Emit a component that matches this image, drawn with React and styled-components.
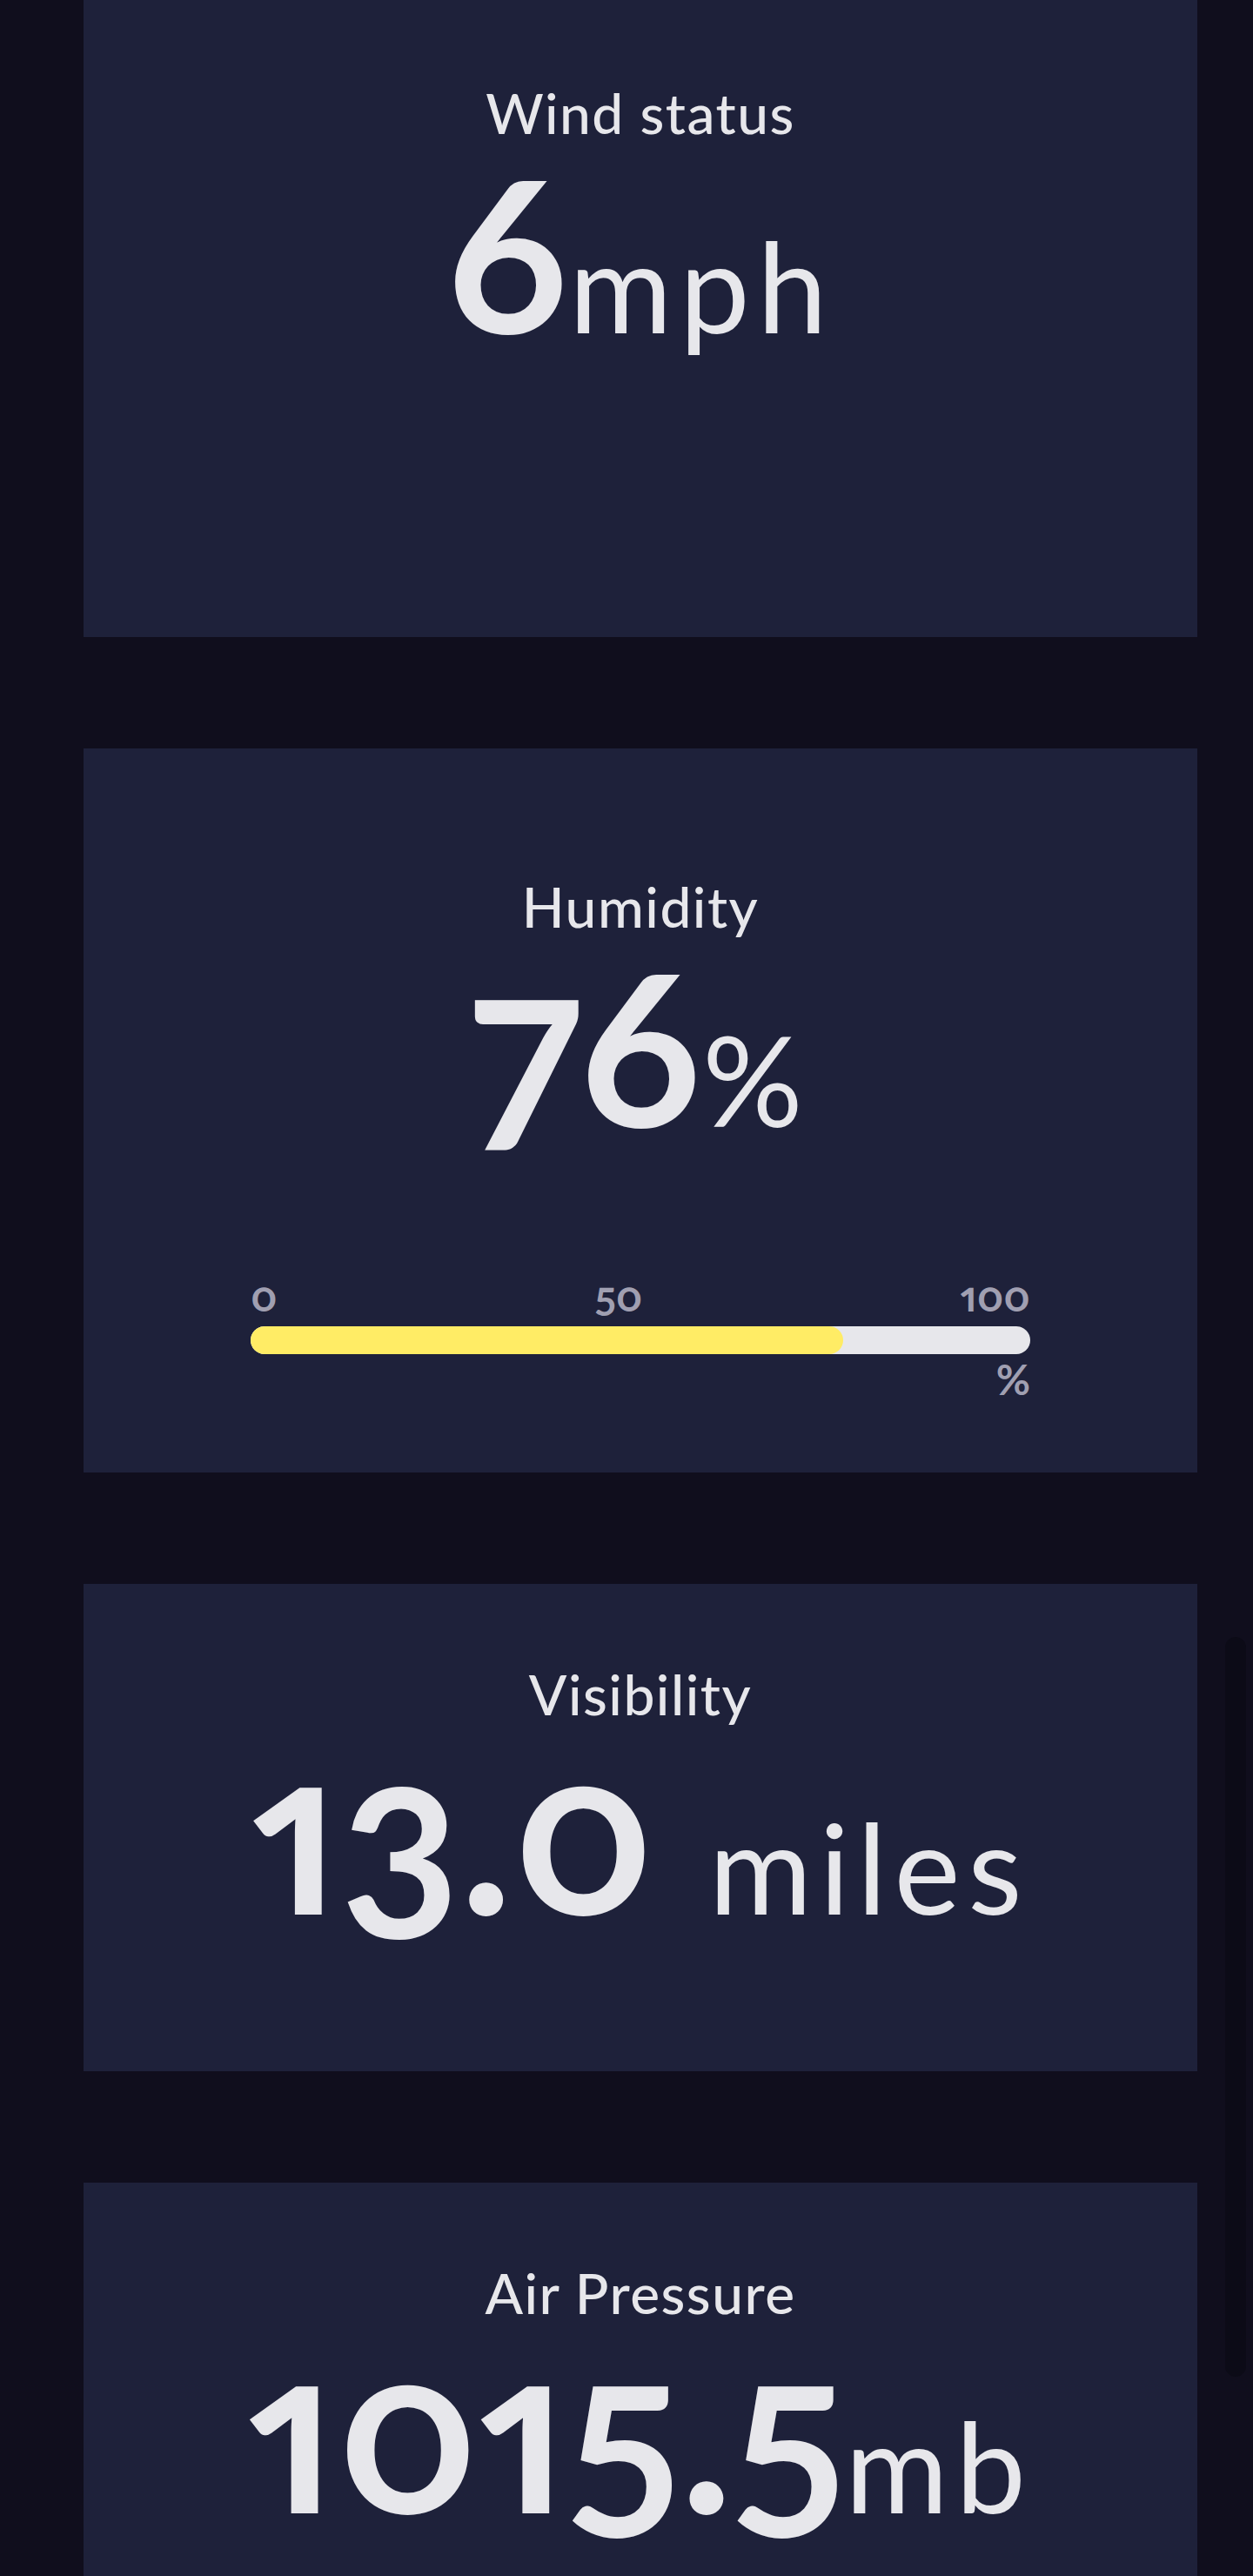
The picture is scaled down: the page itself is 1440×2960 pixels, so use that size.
import React from 'react';
import styled, { createGlobalStyle } from 'styled-components';

const GlobalStyle = createGlobalStyle`
  body {
    margin: 0;
    background-color: #100e1d;
    color: #e7e7eb;
    font-family: Lato, "Open Sans", sans-serif;
  }
`;

const Page = styled.main`
  position: relative;
  box-sizing: border-box;
  height: 100vh;
  overflow: hidden;
  padding: 0 64px 0 96px;
  display: flex;
  flex-direction: column;
  gap: 128px;
`;

const Card = styled.section`
  flex-shrink: 0;
  background-color: #1e213a;
  display: flex;
  flex-direction: column;
  align-items: center;
  padding: ${({ $top }) => $top}px 0 ${({ $bottom }) => $bottom}px;
`;

const Title = styled.h2`
  margin: 0;
  font-size: 64px;
  line-height: 64px;
  font-weight: 500;
  letter-spacing: 1.5px;
`;

const Value = styled.p`
  margin: 0;
  font-size: 256px;
  line-height: 244px;
  font-weight: 700;
  white-space: nowrap;
  font-variant-numeric: oldstyle-nums proportional-nums;
`;

const Unit = styled.span`
  font-size: 144px;
  line-height: 1;
  font-weight: 400;
  letter-spacing: 0.06em;
`;

const Meter = styled.div`
  width: 896px;
  margin-top: 147px;
  display: flex;
  flex-direction: column;
  color: #a09fb1;
  font-size: 48px;
  line-height: 48px;
  font-weight: 700;
  font-variant-numeric: oldstyle-nums proportional-nums;
`;

const Scale = styled.div`
  display: flex;
  justify-content: space-between;
`;

const Track = styled.div`
  margin-top: 11px;
  height: 32px;
  border-radius: 16px;
  background-color: #e7e7eb;
`;

const Fill = styled.div`
  height: 100%;
  border-radius: 16px;
  background-color: #ffec65;
`;

const Percent = styled.span`
  align-self: flex-end;
  margin-top: 5px;
`;

// faux overlay scrollbar thumb, sits on top of the page
const ScrollThumb = styled.div`
  position: absolute;
  top: 1881px;
  right: 8px;
  width: 24px;
  height: 850px;
  border-radius: 12px;
  background-color: #0c0b17;
`;

const StatCard = ({ title, value, unit, spaced, top = 95, bottom = 157, children }) => (
  <Card $top={top} $bottom={bottom}>
    <Title>{title}</Title>
    <Value>
      {value}
      {spaced ? ' ' : ''}
      <Unit>{unit}</Unit>
    </Value>
    {children}
  </Card>
);

const App = () => {
  const humidity = 76;

  return (
    <>
      <GlobalStyle />
      <Page>
        <StatCard title="Wind status" value="6" unit="mph" top={98} bottom={326} />

        <StatCard title="Humidity" value={humidity} unit="%" top={150} bottom={83}>
          <Meter>
            <Scale>
              <span>0</span>
              <span>50</span>
              <span>100</span>
            </Scale>
            <Track>
              <Fill style={{ width: `${humidity}%` }} />
            </Track>
            <Percent>%</Percent>
          </Meter>
        </StatCard>

        <StatCard title="Visibility" value="13.0" unit="miles" spaced />

        <StatCard title="Air Pressure" value="1015.5" unit="mb" />

        <ScrollThumb />
      </Page>
    </>
  );
};

export default App;
